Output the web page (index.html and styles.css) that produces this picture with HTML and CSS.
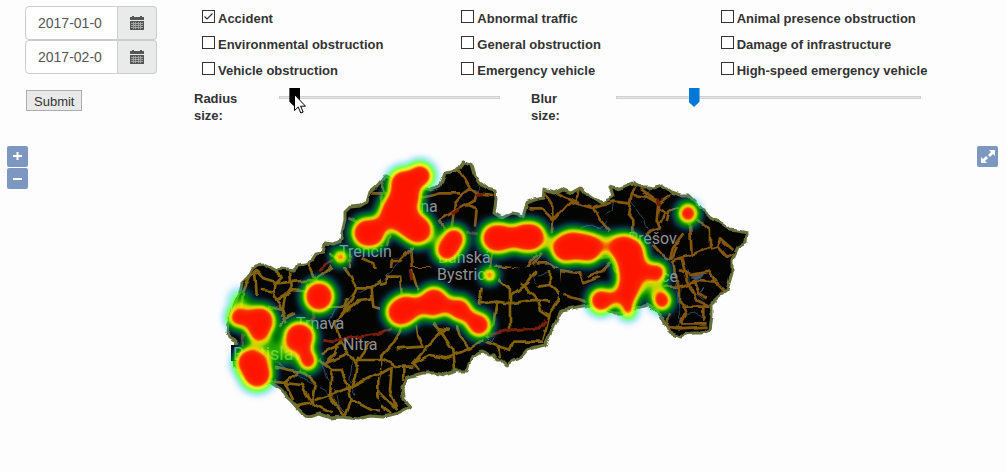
FILE: index.html
```html
<!DOCTYPE html>
<html lang="en">
<head>
<meta charset="utf-8">
<title>Traffic heatmap</title>
<link rel="stylesheet" href="styles.css">
</head>
<body>
<form class="controls">
  <div class="dates">
    <div class="date-group">
      <input class="date-input" type="text" aria-label="Start date" value="2017-01-0">
      <button class="date-button" type="button" aria-label="Pick start date">
        <svg class="calendar" viewBox="0 0 14 14"><path d="M0 1h2V0h2v1h6V0h2v1h2v3H0zM0 5h14v9H0z"/><path class="calendar-grid" d="M1 7.5h12M1 9.5h12M1 11.5h12M3.5 6v7M5.5 6v7M8.5 6v7M10.500 6v7"/></svg>
      </button>
    </div>
    <div class="date-group">
      <input class="date-input" type="text" aria-label="End date" value="2017-02-0">
      <button class="date-button" type="button" aria-label="Pick end date">
        <svg class="calendar" viewBox="0 0 14 14"><path d="M0 1h2V0h2v1h6V0h2v1h2v3H0zM0 5h14v9H0z"/><path class="calendar-grid" d="M1 7.5h12M1 9.5h12M1 11.5h12M3.5 6v7M5.5 6v7M8.5 6v7M10.500 6v7"/></svg>
      </button>
    </div>
    <button class="submit" type="submit">Submit</button>
  </div>
  <div class="filters">
    <div class="events">
      <label class="event"><input class="tick" type="checkbox" checked>Accident</label>
      <label class="event"><input class="tick" type="checkbox">Abnormal traffic</label>
      <label class="event"><input class="tick" type="checkbox">Animal presence obstruction</label>
      <label class="event"><input class="tick" type="checkbox">Environmental obstruction</label>
      <label class="event"><input class="tick" type="checkbox">General obstruction</label>
      <label class="event"><input class="tick" type="checkbox">Damage of infrastructure</label>
      <label class="event"><input class="tick" type="checkbox">Vehicle obstruction</label>
      <label class="event"><input class="tick" type="checkbox">Emergency vehicle</label>
      <label class="event"><input class="tick" type="checkbox">High-speed emergency vehicle</label>
    </div>
    <div class="sliders">
      <div class="slider-group radius-group">
        <label class="slider-label" for="radius">Radius size:</label>
        <input class="slider pressed" id="radius" type="range" min="0" max="200" value="9">
        <svg class="pointer" viewBox="0 0 12 20"><path d="M.5.5v16l3.700-3.500 2.600 6 2.400-1-2.600-5.800h4.900z"/></svg>
      </div>
      <div class="slider-group blur-group">
        <label class="slider-label" for="blur">Blur size:</label>
        <input class="slider" id="blur" type="range" min="0" max="200" value="49">
      </div>
    </div>
  </div>
</form>
<main class="map">
  <svg class="map-canvas" viewBox="0 140 1006 332" role="img" aria-label="Heatmap of Slovakia">
    <defs>
      <path id="country" d="M227 332L228 324L231 317L235 303L240 292L242 283L248 277L252 269L257 265L262 264L268 267L277 272L281 268L287 269L293 270L298 265L305 264L312 260L316 254L323 253L325 243L333 244L340 242L345 220L345 212L350 207L360 206L367 202L370 192L376 187L382 180L385 176L390 178L400 182L410 187L420 187L430 190L440 187L445 173L451 172L457 170L463 162L468 164L472 165L475 175L480 183L487 188L495 190L496 200L494 213L502 218L512 213L518 214L523 217L527 203L534 200L543 198L544 190L554 193L562 189L571 193L580 188L585 194L590 195L602 203L613 197L610 187L617 189L623 187L632 183L640 187L647 187L654 188L662 185L672 192L680 195L688 195L700 207L710 217L720 223L730 230L738 231L747 233L746 243L738 247L732 260L732 273L727 290L718 297L712 303L712 315L710 330L702 333L693 333L686 334L680 337L670 333L662 317L655 309L647 305L640 307L623 313L613 313L602 308L590 305L577 307L562 310L553 328L545 345L536 347L527 350L520 358L514 361L507 366L502 361L497 361L493 355L488 355L482 351L472 357L469 364L467 371L456 371L445 375L435 373L423 373L408 377L402 387L403 398L410 407L398 413L383 417L370 416L358 419L342 417L330 418L320 414L308 417L300 411L293 403L287 397L282 390L270 382L258 386L248 380L235 367L233 353L236 342L229 338Z"/>
      <clipPath id="inside"><use href="#country"/></clipPath>
      <clipPath id="west"><path d="M215 220H338V268H380V440H215Z"/></clipPath>
      <clipPath id="north"><path d="M338 150H500V268H338Z"/></clipPath>
      <clipPath id="east"><path d="M500 170H760V350H560V268H500Z"/></clipPath>
      <clipPath id="south"><path d="M380 268H560V430H380Z"/></clipPath>
      <filter id="rough" x="-5%" y="-5%" width="110%" height="110%" color-interpolation-filters="sRGB">
        <feTurbulence type="fractalNoise" baseFrequency="0.12" numOctaves="1" seed="4"/>
        <feDisplacementMap in="SourceGraphic" scale="5" xChannelSelector="R" yChannelSelector="G"/>
      </filter>
      <filter id="heat" filterUnits="userSpaceOnUse" x="190" y="140" width="600" height="320" color-interpolation-filters="sRGB">
        <feGaussianBlur stdDeviation="4.6"/>
        <feColorMatrix values="0 0 0 1 0  0 0 0 1 0  0 0 0 1 0  0 0 0 1 0"/>
        <feComponentTransfer>
          <feFuncR type="table" tableValues="0.2 0 0 0 0.25 0.8 1 0.97 1"/>
          <feFuncG type="table" tableValues="0.6 0.75 0.9 1 1 1 0.85 0.2 0.08"/>
          <feFuncB type="table" tableValues="1 1 0.4 0 0 0 0 0 0"/>
          <feFuncA type="table" tableValues="0 0.25 0.4 0.5 0.65 0.85 0.95 1 1"/>
        </feComponentTransfer>
      </filter>
    </defs>
    <g filter="url(#rough)">
      <use class="land" href="#country"/>
      <g clip-path="url(#inside)">
        <g class="rivers">
          <path d="M275 362L290 370L305 380L325 390L335 402L342 413M320 358L327 380L335 390L338 405L348 415M345 345L352 362L350 380L355 395M338 305L330 320L340 335M345 300L365 290L382 282L400 260M470 187L478 192L482 185M580 229L592 225L600 228L606 220M605 214L612 210L614 200M630 200L640 212L645 225L650 232M650 190L644 200M676 280L678 300L680 320L676 330M688 270L690 290L704 300M685 315L695 313L704 318M530 275L540 276L548 272M533 277L536 283M480 330L492 342L495 335M385 279L394 276M385 277L388 272"/>
          <path class="lake" d="M691 277L703 273L701 277L695 280ZM700 292L704 288L703 292Z"/>
        </g>
        <g clip-path="url(#west)">
          <path class="road" transform="translate(215 220) scale(.3333)" d="M125 150L105 170L85 215L75 290M125 155L145 175L180 185L175 215L185 240L200 270L215 310M120 150L125 225M180 150L200 170L180 190L240 185L300 180L350 140M225 155L230 200L210 230L200 290M180 240L230 210L280 215M140 210L180 215M280 130L300 175L330 215M345 100L370 120L400 160L425 205L410 240L385 280L360 310L375 360L400 400L430 440M425 205L470 205L500 180L555 170L560 220M470 205L475 260L510 270M385 280L430 240L475 235M330 260L390 260L400 235M320 400L380 370M310 420L350 450L345 530L390 590M350 450L380 450L400 500L410 540L390 590M180 440L270 460L300 490L290 550L240 560M175 485L260 495L290 550L350 580M410 500L360 520L300 540M410 500L470 470L510 450L600 440M430 410L420 470L410 500M465 370L430 420L510 420L560 390L600 385M490 470L490 530L540 575M410 540L470 570L545 575M330 430L400 400M160 260L200 270M190 320L220 290L240 280M375 360L360 400L330 430M255 450L210 490L235 540M280 215L275 190"/>
        </g>
        <g clip-path="url(#north)">
          <path class="road main-road" transform="translate(330 150) scale(.3333)" d="M385 60L400 80L420 115L400 130L375 160L365 230M420 115L440 130L435 150L380 180L330 210L345 240M270 145L330 130L390 130M440 130L490 135M410 165L440 175L435 230M125 130L170 130M150 130L160 180M55 205L80 215M155 95L165 130M180 250L170 285M250 290L210 330L185 330L180 400M95 325L130 340L145 400L80 410L70 450M60 310L60 370L80 410M0 350L50 375L80 410M240 290L245 350L250 430M250 355L300 355L330 380M430 440L460 390L500 350L560 350L600 370M485 310L480 350L500 400L540 420L600 370"/>
        </g>
        <g clip-path="url(#east)">
          <path class="road main-road" transform="translate(480 170) scale(.3333)" d="M145 115L185 115L220 150L215 190M195 70L220 110L220 150L270 95L340 115L360 150L390 185M230 70L300 100M295 60L290 95M340 115L400 95L450 100L455 75L465 50M455 75L500 80L535 100L530 150L540 175L500 190M450 100L445 130L460 150L460 200M535 100L570 75M480 55L530 90M535 120L555 130L540 160M520 225L560 270L580 260L590 230M560 150L570 120L600 115M630 160L635 255L580 270M610 190L580 230L570 265M650 145L690 180L690 230L635 255M690 235L715 230L720 205L760 240M715 230L740 260L760 250M580 270L585 320L600 350L600 400L620 420L600 460L680 460M600 300L630 315L690 305L705 335L740 370M550 350L600 350L660 330L705 335M605 265L620 330L650 390L690 410M640 330L655 370L680 385M615 410L690 410M570 430L560 470L600 475L680 470M670 410L670 450M170 250L140 300M60 290L140 300M185 245L160 285M170 280L210 280L240 300L300 310L310 340L360 320M240 300L235 350M250 375L320 395M310 270L390 260M400 270L370 300L320 320M390 260L410 310"/>
        </g>
        <g clip-path="url(#south)">
          <path class="road" transform="translate(370 270) scale(.3333)" d="M0 50L50 40L50 20L90 20L95 70M125 0L140 50L150 60M335 50L330 100L380 95L420 100L490 90L540 95M385 30L420 60L420 180M380 100L370 160L350 200M450 40L500 85L510 120L540 140M500 0L470 40L420 80M540 0L540 45L575 75L540 130L520 210M540 45L500 50M350 215L390 230L420 240L430 215L520 215M385 230L390 265M260 165L270 200L300 235M190 160L215 190L250 240L255 300M220 180L180 220L130 280L150 300M130 280L180 255L230 265L300 235L340 210M140 165L145 200L160 230L80 235M95 175L70 220L30 265L0 250M30 265L80 290L130 290M30 265L30 310L20 360L80 420M65 290L60 360L80 420M0 330L60 295M100 290L100 330M0 380L60 430M205 175L240 180"/>
        </g>
        <path class="motorway" d="M323 340L333 342L340 339L350 338L365 336L377 334L392 328M318 272L325 265L333 260M305 325L314 318L313 310M488 335L510 330L540 328L546 320M657 199L659 205M452 214L460 209M466 232L478 234M476 196L482 193M410 270L412 280M242 347L244 333"/>
      </g>
      <use class="border" href="#country"/>
    </g>
    <g class="places">
      <rect class="place-shade" x="231" y="345" width="10" height="16"/>
      <text class="capital" x="233" y="360">Bratislava</text>
      <text x="296" y="329">Trnava</text>
      <text x="343" y="350">Nitra</text>
      <text x="339" y="257">Trenčín</text>
      <text x="399" y="212">Žilina</text>
      <text x="438" y="263">Banská</text>
      <text x="437" y="280">Bystrica</text>
      <text x="628" y="244">Prešov</text>
      <text x="630" y="282">Košice</text>
    </g>
    <g class="heat" filter="url(#heat)">
      <path class="spot-large" d="M404 184L406 198L396 214L418 230M394 213L400 203M367 233L371 233M496 238L500 238M525 237L531 237M566 248L572 245L588 248M624 249L630 252L632 270M401 312L406 309M433 303L434 302M319 296L319 297M299 337L300 337M251 363L254 366L257 374M260 321L260 322"/>
      <path class="spot-medium" d="M420 175L421 176M447 250L454 239M632 270L627 294M478 324L479 325M459 309L460 310M259 330L259 331M601 300L601 301M498 238L528 237"/>
      <path class="spot-small" d="M688 213L688 214M662 300L662 301M656 272L657 272M308 360L308 361M238 317L238 318"/>
      <path class="spot-faint" d="M340 257L341 257M489 275L490 275M628 310L628 311M425 174L425 175M640 271L645 271"/>
      <path class="spot-trace" d="M604 242L610 242M274 350L286 354M240 300L241 303M648 285L656 288M612 299L614 298"/>
    </g>
  </svg>
  <div class="zoom-controls">
    <button class="map-button" type="button" aria-label="Zoom in"><svg class="map-icon" viewBox="0 0 21 21"><path d="M6 10h9M10.500 6v8"/></svg></button>
    <button class="map-button" type="button" aria-label="Zoom out"><svg class="map-icon" viewBox="0 0 21 21"><path d="M6 11h9"/></svg></button>
  </div>
  <button class="map-button fullscreen" type="button" aria-label="Full screen"><svg class="map-icon" viewBox="0 0 21 21"><path class="arrowhead" d="M12 4h6v6l-2-2-3 3-2-2 3-3zM4 17v-6l2 2 3-3 2 2-3 3 2 2z"/></svg></button>
</main>
</body>
</html>
```
FILE: styles.css
```css
* {
  box-sizing: border-box;
}

body {
  margin: 0;
  background: #fdfdfd;
  color: #333;
  font: 14px/18px "Liberation Sans", Arial, sans-serif;
}

.controls {
  display: flex;
  padding: 6px 26px 17px 25px;
}

.dates {
  flex: none;
  width: 132px;
  margin-right: 37px;
}

.date-group {
  display: flex;
  height: 34px;
}

.date-input {
  flex: 1;
  min-width: 0;
  padding: 0 12px;
  border: 1px solid #ccc;
  border-radius: 4px 0 0 4px;
  background: #fff;
  color: #555;
  font: inherit;
}

.date-button {
  width: 39px;
  padding: 0 12px;
  border: 1px solid #ccc;
  border-left: 0;
  border-radius: 0 4px 4px 0;
  background: #e9ebea;
}

.calendar {
  display: block;
  width: 14px;
  height: 14px;
  fill: #555;
}

.calendar-grid {
  stroke: #d5d5d5;
  stroke-width: 1;
  opacity: 0.6;
}

.submit {
  display: block;
  height: 21px;
  margin: 16px 0 0 1px;
  padding: 1px 7px 0;
  border: 1px solid #adadad;
  background: #e9e9e9;
  color: #333;
  font-family: inherit;
  font-size: 13px;
}

.filters {
  flex: 1;
}

.events {
  display: grid;
  grid-template-columns: repeat(3, 1fr);
  row-gap: 6px;
  padding: 3px 0 0 8px;
}

.event {
  display: flex;
  gap: 3px;
  height: 20px;
  align-items: flex-start;
  font-size: 13px;
  font-weight: bold;
  line-height: 20px;
}

.tick {
  appearance: none;
  flex: none;
  width: 13px;
  height: 13px;
  margin: 1px 0 0;
  border: 1px solid #333;
  background: #fff;
}

.tick:checked {
  background: #fff url("data:image/svg+xml,%3Csvg xmlns='http://www.w3.org/2000/svg' viewBox='0 0 11 11'%3E%3Cpath d='M1.500 5.500l2.500 2.500 5.500-5.500' fill='none' stroke='%23333' stroke-width='1.200'/%3E%3C/svg%3E");
}

.sliders {
  display: flex;
  gap: 31px;
  padding: 7px 59px 0 0;
}

.slider-group {
  position: relative;
  display: flex;
  align-items: flex-start;
}

.radius-group {
  flex: 306 1 0;
}

.blur-group {
  flex: 390 1 0;
}

.slider-label {
  flex: none;
  width: 85px;
  padding: 2px 30px 0 0;
  font-size: 13px;
  font-weight: bold;
  line-height: 17px;
}

.slider {
  appearance: none;
  flex: 1;
  min-width: 0;
  height: 19px;
  margin: 0;
  background: transparent;
}

.slider::-webkit-slider-runnable-track {
  height: 3px;
  border: 1px solid #d0d0d0;
  background: #e7e7e7;
}

.slider::-webkit-slider-thumb {
  appearance: none;
  width: 11px;
  height: 19px;
  margin-top: -9px;
  background: #0078d7;
  clip-path: polygon(0 0, 100% 0, 100% 72%, 50% 100%, 0 72%);
}

.pressed::-webkit-slider-thumb {
  background: #000;
}

.pointer {
  position: absolute;
  top: 6px;
  left: 100px;
  width: 12px;
  height: 20px;
  fill: #fff;
  stroke: #000;
}

.map {
  position: relative;
  margin-top: -1px;
}

.map-canvas {
  display: block;
  width: 100%;
}

.land {
  fill: #040402;
}

.border {
  fill: none;
  stroke: #68713a;
  stroke-width: 3;
  stroke-linejoin: round;
}

.road {
  fill: none;
  stroke: #84620a;
  stroke-width: 8;
  stroke-linejoin: round;
}

.main-road {
  stroke: #84570c;
}

.motorway {
  fill: none;
  stroke: #751f08;
  stroke-width: 3;
}

.rivers {
  fill: none;
  stroke: #31475d;
  stroke-width: 1;
}

.lake {
  fill: #3e587c;
}

.places {
  fill: #929292;
  font: 16px Roboto, sans-serif;
}

.capital {
  font-size: 18px;
}

.place-shade {
  fill: #000;
}

.heat {
  fill: none;
  stroke: #000;
  stroke-linecap: round;
  stroke-linejoin: round;
}

.spot-large {
  stroke-width: 34;
}

.spot-medium {
  stroke-width: 27;
}

.spot-small {
  stroke-width: 22;
}

.spot-faint {
  stroke-width: 16;
}

.spot-trace {
  stroke-width: 20;
  opacity: 0.5;
}

.zoom-controls {
  position: absolute;
  top: 6px;
  left: 7px;
  display: grid;
  gap: 1px;
}

.map-button {
  width: 21px;
  height: 21px;
  padding: 0;
  border: 0;
  border-radius: 2px;
  background: #7c98c0;
}

.fullscreen {
  position: absolute;
  top: 6px;
  right: 8px;
}

.map-icon {
  display: block;
  width: 21px;
  height: 21px;
  fill: none;
  stroke: #fff;
  stroke-width: 2;
}

.arrowhead {
  fill: #fff;
  stroke: none;
}
```
